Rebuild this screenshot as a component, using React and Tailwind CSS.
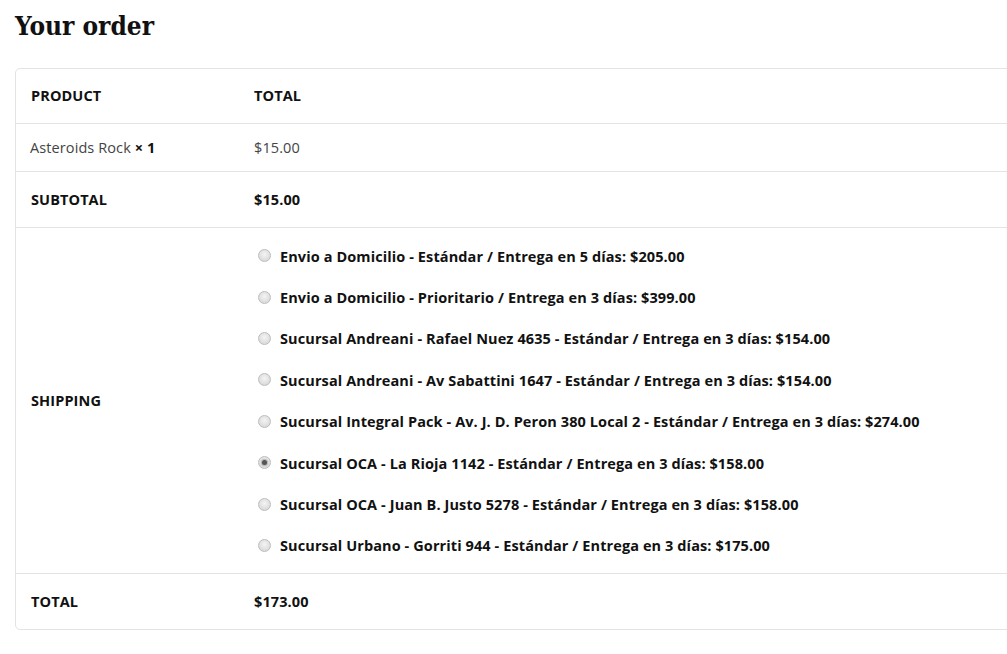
import React from "react";

const options = [
  "Envio a Domicilio - Estándar / Entrega en 5 días: $205.00",
  "Envio a Domicilio - Prioritario / Entrega en 3 días: $399.00",
  "Sucursal Andreani - Rafael Nuez 4635 - Estándar / Entrega en 3 días: $154.00",
  "Sucursal Andreani - Av Sabattini 1647 - Estándar / Entrega en 3 días: $154.00",
  "Sucursal Integral Pack - Av. J. D. Peron 380 Local 2 - Estándar / Entrega en 3 días: $274.00",
  "Sucursal OCA - La Rioja 1142 - Estándar / Entrega en 3 días: $158.00",
  "Sucursal OCA - Juan B. Justo 5278 - Estándar / Entrega en 3 días: $158.00",
  "Sucursal Urbano - Gorriti 944 - Estándar / Entrega en 3 días: $175.00",
];

function Radio({ checked }) {
  return (
    <span className="relative inline-flex h-[13px] w-[13px] shrink-0 items-center justify-center rounded-full border border-[#bdbdbd] bg-[radial-gradient(circle_at_50%_40%,#f4f4f4_0%,#dcdcdc_70%,#cfcfcf_100%)]">
      {checked && <span className="h-[5px] w-[5px] rounded-full bg-[#555] shadow-[0_0_1px_1px_rgba(120,120,120,0.5)]" />}
    </span>
  );
}

export default function App() {
  return (
    <div className="w-full overflow-hidden bg-white" style={{ fontFamily: "'Open Sans', Roboto, sans-serif" }}>
      <div className="pl-[15px] pt-[9px]">
        <h2
          className="text-[26px] font-bold leading-[34px] text-[#111] font-stretch-condensed"
          style={{ fontFamily: "'DejaVu Serif Condensed', 'DejaVu Serif', serif" }}
        >
          Your order
        </h2>
        <div className="mt-[25px] w-[1040px] overflow-hidden rounded-[5px] border border-[#e3e3e3] text-[14.5px] leading-[20px] tracking-[0.1px] text-[#111]">
          <div className="flex h-[55px] items-center border-b border-[#e3e3e3] font-bold">
            <div className="w-[223px] pl-[15px]">PRODUCT</div>
            <div className="pl-[15px]">TOTAL</div>
          </div>
          <div className="flex h-[48px] items-center border-b border-[#e3e3e3]">
            <div className="w-[223px] pl-[14px] text-[#444]">
              Asteroids Rock <span className="font-bold text-[#111]">× 1</span>
            </div>
            <div className="pl-[15px] text-[#444]">$15.00</div>
          </div>
          <div className="flex h-[56px] items-center border-b border-[#e3e3e3] font-bold">
            <div className="w-[223px] pl-[15px]">SUBTOTAL</div>
            <div className="pl-[15px]">$15.00</div>
          </div>
          <div className="flex items-center border-b border-[#e3e3e3]">
            <div className="w-[223px] pl-[15px] font-bold">SHIPPING</div>
            <div className="flex flex-col gap-[20px] py-[17px] pl-[19px] font-bold">
              {options.map((o, i) => (
                <div key={i} className="flex h-[21.4px] items-center gap-[9px]">
                  <Radio checked={i === 5} />
                  <span className="relative top-[1px]">{o}</span>
                </div>
              ))}
            </div>
          </div>
          <div className="flex h-[55px] items-center font-bold">
            <div className="w-[223px] pl-[15px]">TOTAL</div>
            <div className="pl-[15px]">$173.00</div>
          </div>
        </div>
      </div>
    </div>
  );
}
